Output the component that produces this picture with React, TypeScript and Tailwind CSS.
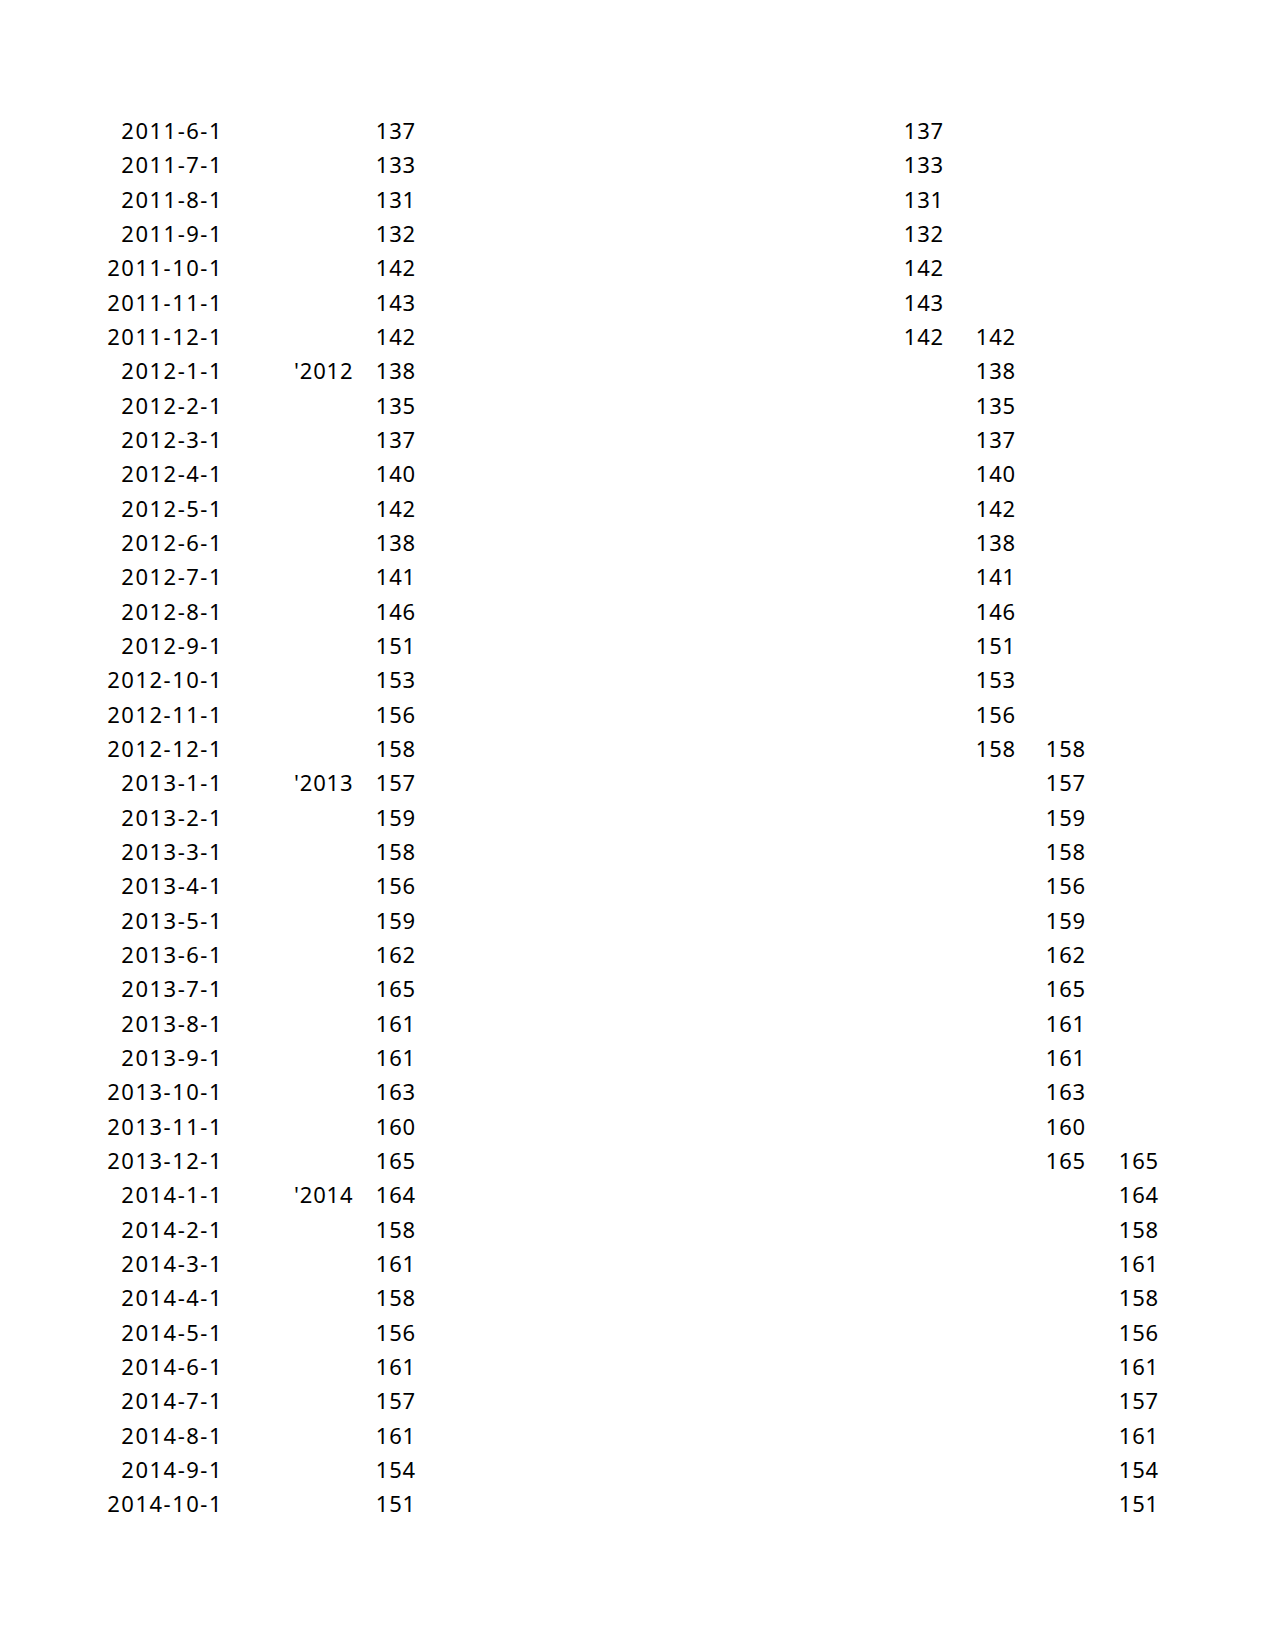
import React from "react";

const data: [string, number][] = [
  ["2011-6-1", 137], ["2011-7-1", 133], ["2011-8-1", 131], ["2011-9-1", 132],
  ["2011-10-1", 142], ["2011-11-1", 143], ["2011-12-1", 142],
  ["2012-1-1", 138], ["2012-2-1", 135], ["2012-3-1", 137], ["2012-4-1", 140],
  ["2012-5-1", 142], ["2012-6-1", 138], ["2012-7-1", 141], ["2012-8-1", 146],
  ["2012-9-1", 151], ["2012-10-1", 153], ["2012-11-1", 156], ["2012-12-1", 158],
  ["2013-1-1", 157], ["2013-2-1", 159], ["2013-3-1", 158], ["2013-4-1", 156],
  ["2013-5-1", 159], ["2013-6-1", 162], ["2013-7-1", 165], ["2013-8-1", 161],
  ["2013-9-1", 161], ["2013-10-1", 163], ["2013-11-1", 160], ["2013-12-1", 165],
  ["2014-1-1", 164], ["2014-2-1", 158], ["2014-3-1", 161], ["2014-4-1", 158],
  ["2014-5-1", 156], ["2014-6-1", 161], ["2014-7-1", 157], ["2014-8-1", 161],
  ["2014-9-1", 154], ["2014-10-1", 151],
];

const labels: Record<number, string> = { 7: "'2012", 19: "'2013", 31: "'2014" };

function inRange(i: number, a: number, b: number) {
  return i >= a && i <= b;
}

export default function App() {
  return (
    <div
      className="w-[1275px] h-[1650px] bg-white text-black pt-[113px]"
      style={{ fontFamily: "'Noto Sans', 'Open Sans', sans-serif" }}
    >
      {data.map(([d, v], i) => (
        <div
          key={i}
          className="grid grid-cols-[223px_132px_61px_528px_72px_70px_73px] h-[34.33px] items-center text-[22px] leading-none tracking-[0.8px]"
        >
          <div className="text-right tracking-[1.5px]">{d}</div>
          <div className="pl-[71px]">{labels[i] ?? ""}</div>
          <div className="text-right">{v}</div>
          <div className="text-right">{inRange(i, 0, 6) ? v : ""}</div>
          <div className="text-right">{inRange(i, 6, 18) ? v : ""}</div>
          <div className="text-right">{inRange(i, 18, 30) ? v : ""}</div>
          <div className="text-right">{inRange(i, 30, 40) ? v : ""}</div>
        </div>
      ))}
    </div>
  );
}
